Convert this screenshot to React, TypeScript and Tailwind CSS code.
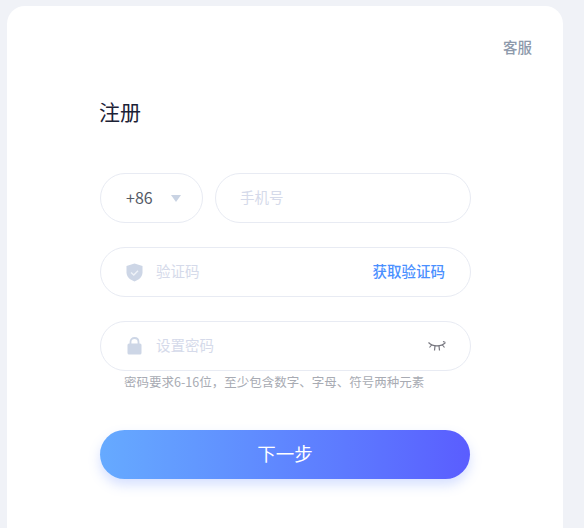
import React from "react";

const font = "font-['Noto_Sans_CJK_SC','Liberation_Sans',sans-serif]";

function ShieldIcon() {
  return (
    <svg width="17" height="19" viewBox="0 0 17 19" className="shrink-0">
      <path d="M8.5 0.5 L16.5 3 V9.5 C16.5 14 12.5 17 8.5 18.5 C4.5 17 0.5 14 0.5 9.5 V3 Z" fill="#cdd6e6" />
      <path d="M5 9.5 L7.8 12 L12 7.8" fill="none" stroke="#eef2f8" strokeWidth="1.4" />
    </svg>
  );
}

function LockIcon() {
  return (
    <svg width="15" height="18" viewBox="0 0 15 18" className="shrink-0">
      <path d="M3.5 8 V5 C3.5 2.6 5.2 1 7.5 1 C9.8 1 11.5 2.6 11.5 5 V8" fill="none" stroke="#cdd6e6" strokeWidth="1.8" />
      <rect x="0.5" y="6.5" width="14" height="11" rx="1.5" fill="#cdd6e6" />
    </svg>
  );
}

function EyeClosedIcon() {
  return (
    <svg width="18" height="11" viewBox="0 0 18 11" className="shrink-0">
      <path
        d="M0.5 1.5 C5 6 13 6 17.5 1.5 M3.5 4 L1.5 6.5 M7 5 L6.5 9.5 M11 5 L11.5 9.5 M14.5 4 L16.5 6.5 M17.5 1.5 L15 0.5"
        fill="none"
        stroke="#77777f"
        strokeWidth="1.2"
      />
    </svg>
  );
}

export default function App() {
  return (
    <div className={`h-[528px] w-[584px] overflow-hidden bg-[#f0f2f7] pl-[7px] pt-[6px] ${font}`}>
      <div className="h-[540px] w-[556px] rounded-t-[18px] bg-white pl-[93px] pr-[31px] pt-[31px]">
        <div className="flex justify-end">
          <span className="text-[14.5px] font-medium leading-[20px] text-[#8d99ab]">客服</span>
        </div>

        <h1 className="ml-[-1px] mt-[39px] text-[21px] leading-[30px] text-[#1c2236]">注册</h1>

        <div className="mt-[47px] w-[371px]">
          {/* Teléfono */}
          <div className="flex h-[50px] gap-[12px]">
            <div className="flex w-[103px] items-center rounded-full border-[1.5px] border-[#e8ebf3] pl-[25px]">
              <span className="pb-[2px] text-[16px] text-[#555a66]">+86</span>
              <span className="ml-[18px] h-0 w-0 border-x-[5.5px] border-t-[7px] border-x-transparent border-t-[#c9d3e3]" />
            </div>
            <div className="flex flex-1 items-center rounded-full border-[1.5px] border-[#e8ebf3] pl-[24px]">
              <span className="pb-[2px] text-[14.5px] text-[#d5daea]">手机号</span>
            </div>
          </div>

          {/* Código */}
          <div className="mt-[24px] flex h-[50px] items-center rounded-full border-[1.5px] border-[#e8ebf3] pl-[25px] pr-[25px]">
            <ShieldIcon />
            <span className="ml-[13px] flex-1 pb-[2px] text-[14.5px] text-[#d5daea]">验证码</span>
            <span className="pb-[2px] text-[14.5px] font-medium text-[#4a90ff]">获取验证码</span>
          </div>

          {/* Contraseña */}
          <div className="mt-[24px] flex h-[50px] items-center rounded-full border-[1.5px] border-[#e8ebf3] pl-[26px] pr-[24px]">
            <LockIcon />
            <span className="ml-[14px] flex-1 pb-[2px] text-[14.5px] text-[#d5daea]">设置密码</span>
            <EyeClosedIcon />
          </div>
          <p className="mt-[2px] pl-[24px] text-[12.5px] leading-[18px] text-[#a8abb3]">
            密码要求6-16位，至少包含数字、字母、符号两种元素
          </p>

          <button className="mt-[39px] flex h-[49px] w-[370px] items-center justify-center rounded-full bg-gradient-to-r from-[#66aaff] to-[#5a5dff] pb-[2px] text-[18.5px] text-white shadow-[0_6px_12px_rgba(90,130,255,0.25)]">
            下一步
          </button>
        </div>
      </div>
    </div>
  );
}
